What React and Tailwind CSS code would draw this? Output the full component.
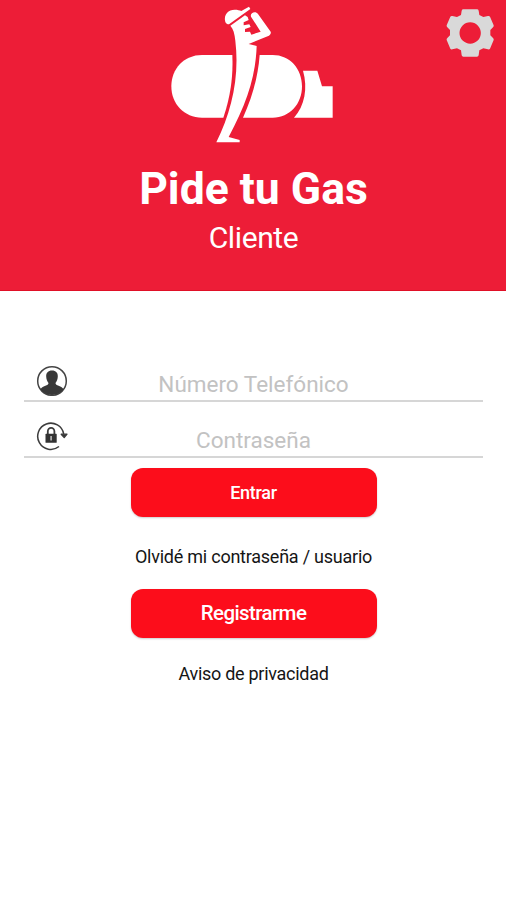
import React from "react";

function Logo() {
  return (
    <svg
      className="block h-[150px] w-[180px]"
      viewBox="0 0 540 450"
      fill="#fff"
    >
      <path d="M126 165H217C220 230 211 292 190 353H126C72 353 34 312 34 259S72 165 126 165Z" />
      <path d="M299 165H338C390 165 426 206 426 259S390 353 338 353H249C276 294 294 232 299 165Z" />
      <path d="M429 212H472L486 259H518V353H402C434 318 444 264 429 212Z" />
      <path d="M196 66C190 42 206 29 224 29C233 29 239 31 244 33L267 20L271 27L207 73C202 73 198 71 196 66Z" />
      <path d="M211 77L255 46L263 51L266 60L251 67L251 76L268 73L272 81L255 87L255 96L270 95L274 104L302 95L273 50C269 38 287 32 294 42L332 95C334 101 330 106 323 109L266 132L290 138C287 230 260 310 206 411L239 420V427H169C215 333 239 232 226 122C224 101 220 86 211 77Z" />
    </svg>
  );
}

function GearIcon() {
  return (
    <svg className="block h-[65px] w-[70px]" viewBox="0 0 210 195">
      <path
        d="M82 28H123Q127 28 128 32L130 45L142 51L156 48Q160 47 162 50L173 76Q174 79 171 82L163 90V106L171 114Q174 117 173 120L162 146Q160 149 156 148L142 145L130 151L128 166Q127 170 123 170H82Q78 170 77 166L75 151L63 145L49 148Q45 149 43 146L32 120Q31 117 34 114L42 106V90L34 82Q31 79 32 76L43 50Q45 47 49 48L63 51L75 45L77 32Q78 28 82 28ZM102.500 67A32 32 0 1 0 102.500 131A32 32 0 1 0 102.500 67Z"
        fill="#d9d9d9"
        fillRule="evenodd"
      />
    </svg>
  );
}

function UserIcon() {
  return (
    <svg className="block h-8 w-8" viewBox="0 0 32 32">
      <circle cx="16" cy="17" r="14.3" fill="#fff" stroke="#444" strokeWidth="1.5" />
      <path
        d="M16 6.500C12.100 6.500 10 9 10.200 12.500C10.300 15.500 11.300 17.500 12.500 19C12.400 20.300 11.800 20.800 10 21.400C7.500 22.200 5.500 23.300 4.500 25.300C7.300 29.300 11.500 31 16 31S24.700 29.300 27.500 25.300C26.500 23.300 24.500 22.200 22 21.400C20.200 20.800 19.600 20.300 19.500 19C20.700 17.500 21.700 15.500 21.800 12.500C22 9 19.900 6.500 16 6.500Z"
        fill="#383838"
      />
    </svg>
  );
}

function LockIcon() {
  return (
    <svg className="block h-8 w-8" viewBox="0 0 32 32" fill="none" stroke="#3c3c3c">
      <path d="M23 26.500A13.100 13.100 0 1 1 27.700 14" strokeWidth="1.5" />
      <path d="M25.200 14.200H31L28.200 17.500Z" fill="#333" strokeWidth="1.3" strokeLinejoin="round" />
      <path d="M11.800 14.500V11.500A3.300 3.600 0 0 1 18.400 11.500V14.500" strokeWidth="1.8" />
      <rect x="9.500" y="13.800" width="11.200" height="9" rx="0.6" fill="#333" stroke="none" />
      <path d="M15.100 16V20.500" stroke="#bbb" strokeWidth="1.6" />
    </svg>
  );
}

function Field({ icon, label, type }) {
  return (
    <div className="relative ml-6 mr-[23px] h-14 border-b-2 border-[#d6d6d6]">
      <span className="absolute left-3 top-[18px]">{icon}</span>
      <input
        type={type}
        placeholder={label}
        className="block h-full w-full pt-[21px] text-center text-[22.5px] text-black outline-none placeholder:text-[#c2c2c2]"
      />
    </div>
  );
}

export default function App() {
  return (
    <div className="h-[900px] w-full overflow-hidden bg-white font-[Roboto,sans-serif] text-[#151515]">
      <header className="relative flex h-[291px] flex-col items-center border-b border-[#e00f27] bg-[#ed1d37] text-white">
        <div className="-ml-1.5">
          <Logo />
        </div>
        <button className="absolute right-0 top-0" aria-label="Ajustes">
          <GearIcon />
        </button>
        <h1 className="mt-[13px] pl-px text-[44.5px] font-bold leading-[52px]">
          Pide tu Gas
        </h1>
        <p className="mt-[3px] pl-px text-[30px] leading-10 tracking-[-0.4px]">Cliente</p>
      </header>
      <form className="pt-[55px]">
        <Field icon={<UserIcon />} label="Número Telefónico" type="tel" />
        <Field icon={<LockIcon />} label="Contraseña" type="password" />
        <div className="flex flex-col items-center pl-px pt-[9.5px]">
          <button
            type="button"
            className="h-[49px] w-[246px] rounded-xl bg-[#fc0d1b] text-[18px] font-medium tracking-[-0.3px] text-white shadow-[0_1px_2px_#0003]"
          >
            Entrar
          </button>
          <a className="mt-7 text-[18px] leading-6 tracking-[-0.24px]">
            Olvidé mi contraseña / usuario
          </a>
          <button
            type="button"
            className="mt-5 h-[49px] w-[246px] rounded-xl bg-[#fc0d1b] pt-px text-[20.5px] font-medium tracking-[-0.6px] text-white shadow-[0_1px_2px_#0003]"
          >
            Registrarme
          </button>
          <a className="mt-6 text-[18px] leading-6 tracking-[-0.28px]">
            Aviso de privacidad
          </a>
        </div>
      </form>
    </div>
  );
}
